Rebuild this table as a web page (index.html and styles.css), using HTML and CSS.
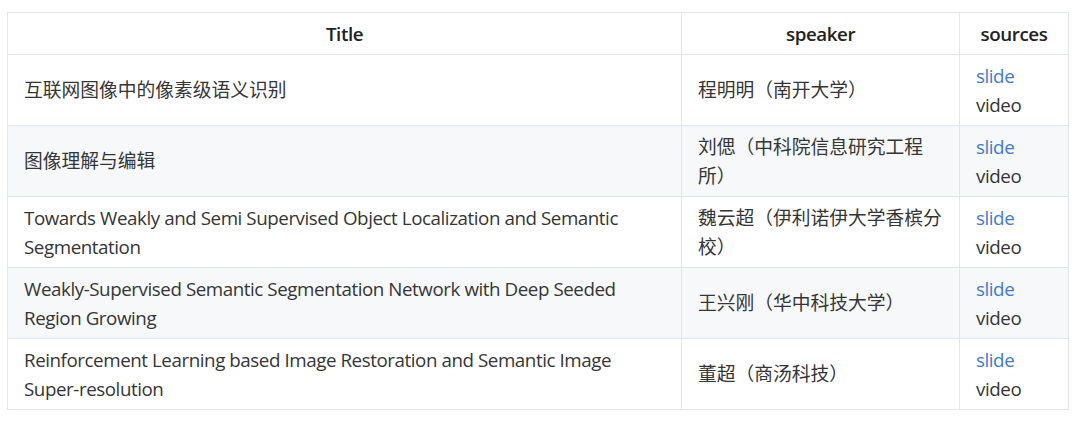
FILE: index.html
```html
<!DOCTYPE html>
<html lang="zh">
<head>
<meta charset="utf-8">
<title>Talks</title>
<link rel="stylesheet" href="styles.css">
</head>
<body>
<table class="talks">
  <colgroup>
    <col class="c-title">
    <col class="c-speaker">
    <col class="c-src">
  </colgroup>
  <thead>
    <tr><th class="en">Title</th><th class="en">speaker</th><th class="en">sources</th></tr>
  </thead>
  <tbody>
    <tr>
      <td>互联网图像中的像素级语义识别</td>
      <td>程明明（南开大学）</td>
      <td class="en"><a class="link" href="#">slide</a><br>video</td>
    </tr>
    <tr>
      <td>图像理解与编辑</td>
      <td>刘偲（中科院信息研究工程所）</td>
      <td class="en"><a class="link" href="#">slide</a><br>video</td>
    </tr>
    <tr>
      <td class="en">Towards Weakly and Semi Supervised Object Localization and Semantic Segmentation</td>
      <td>魏云超（伊利诺伊大学香槟分校）</td>
      <td class="en"><a class="link" href="#">slide</a><br>video</td>
    </tr>
    <tr>
      <td class="en">Weakly-Supervised Semantic Segmentation Network with Deep Seeded Region Growing</td>
      <td>王兴刚（华中科技大学）</td>
      <td class="en"><a class="link" href="#">slide</a><br>video</td>
    </tr>
    <tr>
      <td class="en">Reinforcement Learning based Image Restoration and Semantic Image Super-resolution</td>
      <td>董超（商汤科技）</td>
      <td class="en"><a class="link" href="#">slide</a><br>video</td>
    </tr>
  </tbody>
</table>
</body>
</html>
```
FILE: styles.css
```css
html, body {
  margin: 0;
  background: #ffffff;
}
body {
  padding: 12px 0 0 7px;
  font-family: "Open Sans", "Noto Sans CJK SC", sans-serif;
  font-size: 18.75px;
  line-height: 28.5px;
  color: #353535;
}
.talks {
  border-collapse: collapse;
  table-layout: fixed;
  width: 1061px;
}
.c-title { width: 674px; }
.c-speaker { width: 278px; }
.c-src { width: 109px; }
.talks th,
.talks td {
  border: 1px solid #e1e4e8;
  padding: 7.5px 16px 5.5px 16px;
  vertical-align: middle;
  text-align: left;
}
.talks th {
  text-align: center;
  font-weight: 600;
  color: #222222;
  padding: 7px 8px 5px 8px;
}
.en {
  letter-spacing: -0.43px;
}
.talks tbody tr:nth-child(2n) {
  background: #f6f8fa;
}
.link {
  color: #3f7ad6;
  text-decoration: none;
}
```
